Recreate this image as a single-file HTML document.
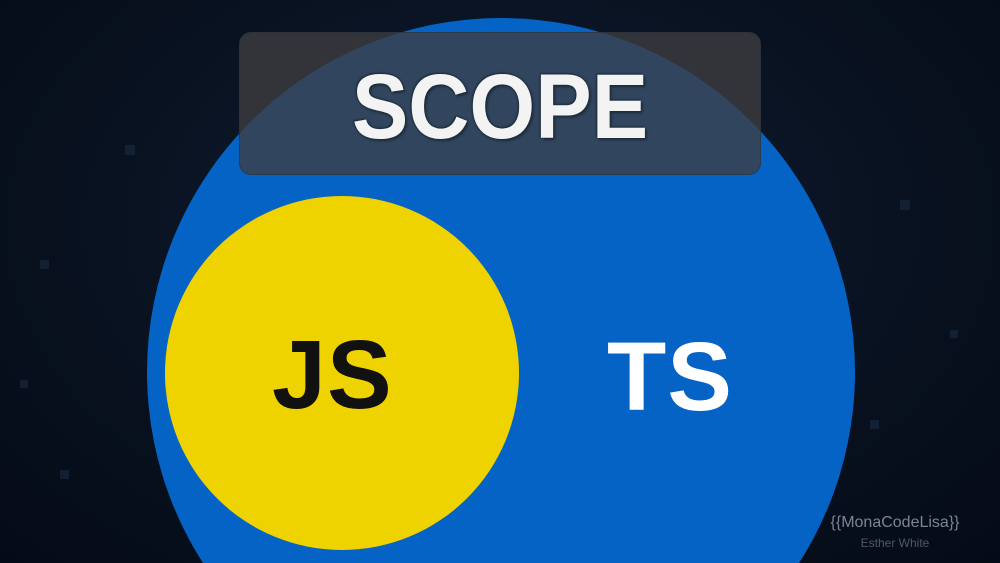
<!DOCTYPE html>
<html><head><style>
html,body{margin:0;padding:0;width:1000px;height:563px;overflow:hidden}
body{font-family:"Liberation Sans",sans-serif}
.wrap{position:relative;width:1000px;height:563px;overflow:hidden;background:radial-gradient(ellipse at 50% 40%,#0f1e33 0%,#08111f 60%,#050b16 100%)}
.sq{position:absolute;background:#1a2b42;opacity:.6}
svg.bg{position:absolute;left:0;top:0}
.yel{position:absolute;left:165px;top:196px;width:354px;height:354px;border-radius:50%;background:#efd300}
.t{position:absolute;font-weight:bold;font-size:97px;line-height:1;letter-spacing:1px}
.box{position:absolute;left:239px;top:32px;width:522px;height:143px;border-radius:12px;background:rgba(62,62,64,.78);border:1px solid rgba(40,50,60,.6);box-sizing:border-box}
.scope{position:absolute;left:0;width:1000px;top:61px;text-align:center;font-weight:bold;font-size:92px;line-height:1;color:#f3f3f3;transform:scaleX(.92);text-shadow:0 0 3px #1e2c3c,2px 2px 3px #1e2c3c,-1px -1px 2px #1e2c3c}
.wm{position:absolute;left:812px;top:515px;width:166px;text-align:center;color:#7a8594;font-size:16px;line-height:1}
.wm2{position:absolute;left:812px;top:537px;width:166px;text-align:center;color:#4f5968;font-size:12px;line-height:1}
</style></head><body><div class="wrap">
<div class="sq" style="left:125px;top:145px;width:10px;height:10px"></div>
<div class="sq" style="left:40px;top:260px;width:9px;height:9px"></div>
<div class="sq" style="left:20px;top:380px;width:8px;height:8px"></div>
<div class="sq" style="left:900px;top:200px;width:10px;height:10px"></div>
<div class="sq" style="left:950px;top:330px;width:8px;height:8px"></div>
<div class="sq" style="left:870px;top:420px;width:9px;height:9px"></div>
<div class="sq" style="left:60px;top:470px;width:9px;height:9px"></div>
<svg class="bg" width="1000" height="563"><circle cx="501" cy="372" r="354" fill="#0563c6"/></svg>
<div class="yel"></div>
<div class="t" style="left:272px;top:326px;color:#111">JS</div>
<div class="t" style="left:607px;top:328px;color:#fff">TS</div>
<div class="box"></div>
<div class="scope">SCOPE</div>
<div class="wm">{{MonaCodeLisa}}</div>
<div class="wm2">Esther White</div>
</div></body></html>
